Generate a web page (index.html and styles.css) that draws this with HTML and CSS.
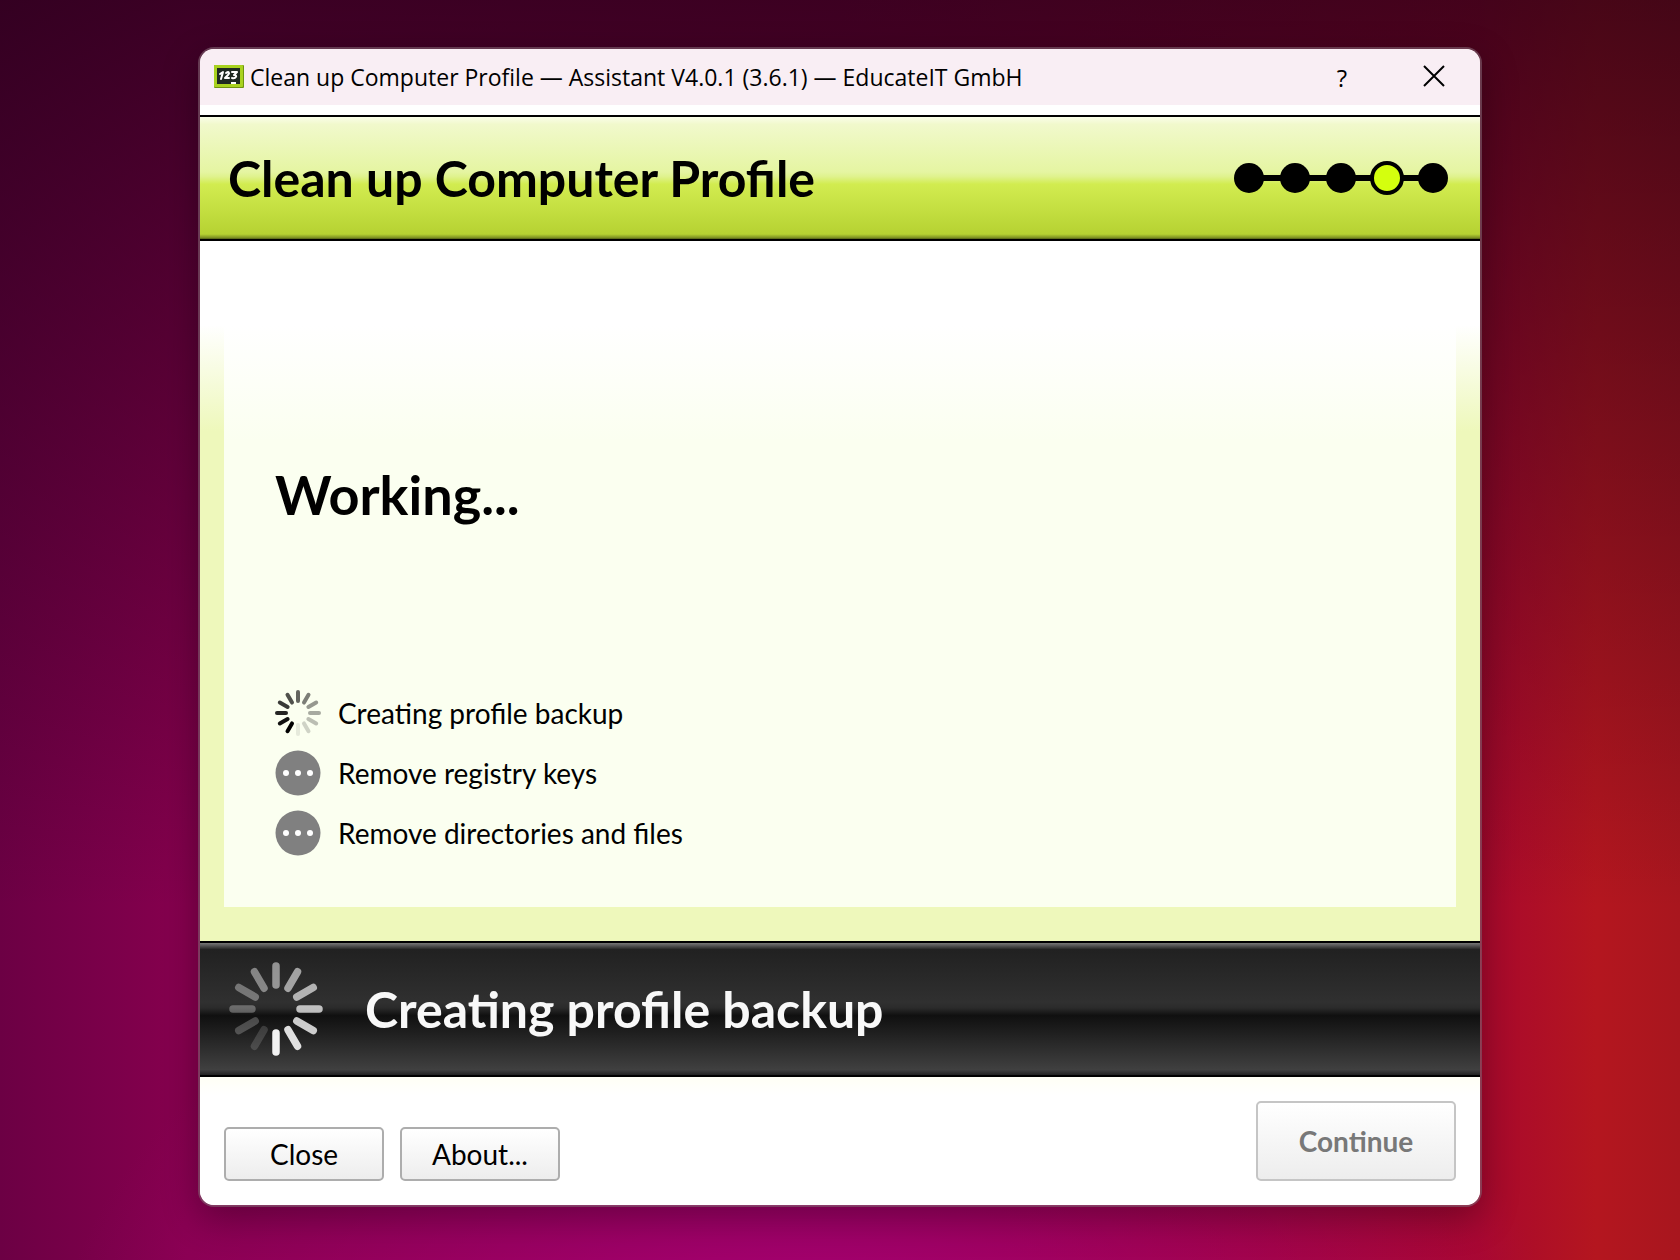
FILE: index.html
```html
<!DOCTYPE html>
<html lang="en">
<head>
    <meta charset="UTF-8">
    <meta name="viewport" content="width=device-width, initial-scale=1.0">
    <title>Clean up Computer Profile</title>
    <link rel="stylesheet" href="styles.css">
</head>
<body>
    <main class="window">
        <header class="titlebar">
            <svg class="app-icon" viewBox="0 0 30 24" aria-hidden="true">
                <rect width="30" height="23" rx="1" fill="#6f9410"/>
                <rect width="29" height="22" rx="1" fill="#a9d21f"/>
                <rect x="3" y="3" width="23" height="16" fill="#1f2a22"/>
                <g fill="none" stroke="#fff" stroke-width="2" stroke-linecap="round" stroke-linejoin="round">
                    <path d="M6 9l3-2-2 7"/>
                    <path d="M12 8c3-2 4 0 2 2l-3 3h4"/>
                    <path d="M18 7h5l-3 3c4 0 2 4-2 3"/>
                </g>
                <path d="M17 18h5" stroke="#fff" stroke-width="2"/>
            </svg>
            <span class="titlebar-text">Clean up Computer Profile — Assistant V4.0.1 (3.6.1) — EducateIT GmbH</span>
            <button class="titlebar-button" type="button" aria-label="Help">?</button>
            <button class="titlebar-button" type="button" aria-label="Close window">
                <svg class="close-icon" viewBox="0 0 22 22"><path d="M1 1l20 20M21 1L1 21"/></svg>
            </button>
        </header>

        <section class="banner">
            <h1>Clean up Computer Profile</h1>
            <ol class="steps" aria-label="Progress">
                <li class="step"></li>
                <li class="step"></li>
                <li class="step"></li>
                <li class="step current" aria-current="step"></li>
                <li class="step"></li>
            </ol>
        </section>

        <section class="content">
            <div class="panel">
                <h2>Working...</h2>
                <ul class="tasks">
                    <li>
                        <svg class="task-icon" viewBox="-23 -23 46 46" aria-hidden="true"><use href="#spinner-small"/></svg>
                        Creating profile backup
                    </li>
                    <li>
                        <svg class="task-icon" viewBox="-23 -23 46 46" aria-hidden="true"><use href="#pending"/></svg>
                        Remove registry keys
                    </li>
                    <li>
                        <svg class="task-icon" viewBox="-23 -23 46 46" aria-hidden="true"><use href="#pending"/></svg>
                        Remove directories and files
                    </li>
                </ul>
            </div>
        </section>

        <section class="status">
            <svg class="status-spinner" viewBox="-47 -47 94 94" aria-hidden="true">
                <g stroke="#fff" stroke-width="7.5" stroke-linecap="round">
                    <path d="M0-24v-19" opacity=".5"/>
                    <path d="M0-24v-19" opacity=".57" transform="rotate(30)"/>
                    <path d="M0-24v-19" opacity=".64" transform="rotate(60)"/>
                    <path d="M0-24v-19" opacity=".71" transform="rotate(90)"/>
                    <path d="M0-24v-19" opacity=".78" transform="rotate(120)"/>
                    <path d="M0-24v-19" opacity=".86" transform="rotate(150)"/>
                    <path d="M0-24v-19" opacity=".94" transform="rotate(180)"/>
                    <path d="M0-24v-19" opacity=".15" transform="rotate(210)"/>
                    <path d="M0-24v-19" opacity=".23" transform="rotate(240)"/>
                    <path d="M0-24v-19" opacity=".3" transform="rotate(270)"/>
                    <path d="M0-24v-19" opacity=".35" transform="rotate(300)"/>
                    <path d="M0-24v-19" opacity=".43" transform="rotate(330)"/>
                </g>
            </svg>
            <p>Creating profile backup</p>
        </section>

        <footer class="actions">
            <button class="button" type="button">Close</button>
            <button class="button" type="button">About...</button>
            <button class="button button-continue" type="button" disabled>Continue</button>
        </footer>
    </main>

    <svg class="symbols" width="0" height="0" aria-hidden="true">
        <defs>
            <g id="spinner-small" stroke="#000" stroke-width="4" stroke-linecap="round">
                <path d="M0-12v-9" opacity=".6"/>
                <path d="M0-12v-9" opacity=".5" transform="rotate(30)"/>
                <path d="M0-12v-9" opacity=".4" transform="rotate(60)"/>
                <path d="M0-12v-9" opacity=".33" transform="rotate(90)"/>
                <path d="M0-12v-9" opacity=".25" transform="rotate(120)"/>
                <path d="M0-12v-9" opacity=".17" transform="rotate(150)"/>
                <path d="M0-12v-9" opacity=".08" transform="rotate(180)"/>
                <path d="M0-12v-9" transform="rotate(210)"/>
                <path d="M0-12v-9" opacity=".93" transform="rotate(240)"/>
                <path d="M0-12v-9" opacity=".85" transform="rotate(270)"/>
                <path d="M0-12v-9" opacity=".77" transform="rotate(300)"/>
                <path d="M0-12v-9" opacity=".68" transform="rotate(330)"/>
            </g>
            <g id="pending">
                <circle r="22.5" fill="#808080"/>
                <circle cx="-12" r="3" fill="#fff"/>
                <circle r="3" fill="#fff"/>
                <circle cx="12" r="3" fill="#fff"/>
            </g>
        </defs>
    </svg>
</body>
</html>
```

FILE: styles.css
```css
* {
    margin: 0;
    padding: 0;
    box-sizing: border-box;
}

body {
    font-family: Lato, sans-serif;
    color: #000;
    min-height: 100vh;
    display: flex;
    padding: 47px 198px 53px;
    background:
        radial-gradient(ellipse 45% 40% at 48% 110%, #a80078 0%, rgba(168, 0, 120, 0) 100%),
        linear-gradient(to bottom, rgba(30, 0, 20, 0.72) 0%, rgba(30, 0, 20, 0) 72%),
        linear-gradient(to right, #6c0044 0%, #86004e 11%, #8c0044 50%, #a8082e 88%, #b4161f 95%, #a8161e 100%);
}

.window {
    flex: 1;
    display: flex;
    flex-direction: column;
    overflow: hidden;
    background: #fff;
    background-clip: padding-box;
    border: 2px solid rgba(128, 96, 112, 0.6);
    border-radius: 16px;
    box-shadow: 0 12px 36px rgba(0, 0, 0, 0.3);
}

/* Title bar */
.titlebar {
    height: 56px;
    display: flex;
    align-items: center;
    padding-left: 14px;
    background: #f9eef4;
    font-family: "Open Sans", sans-serif;
    font-size: 24px;
}

.app-icon {
    width: 30px;
    height: 24px;
    margin-right: 6px;
}

.titlebar-text {
    flex: 1;
    font-size: 23px;
}

.titlebar-button {
    width: 92px;
    height: 56px;
    border: none;
    background: none;
    font: inherit;
}

.close-icon {
    width: 22px;
    height: 22px;
    fill: none;
    stroke: #000;
    stroke-width: 2;
}

/* Green banner */
.banner {
    display: flex;
    align-items: center;
    justify-content: space-between;
    height: 126px;
    margin-top: 10px;
    padding: 0 32px 0 28px;
    border-top: 2px solid #000;
    border-bottom: 2px solid #000;
    background: linear-gradient(to bottom, #fafde8 0%, #f1f9cc 6%, #e5f5a2 45%, #dff28c 49%, #d2ec50 55%, #b6d232 96%, #7c9022 99%, #4d5a15 100%);
}

h1 {
    font-size: 50px;
    line-height: 60px;
}

/* The black line behind the dots joins the steps */
.steps {
    display: flex;
    align-items: center;
    gap: 16px;
    list-style: none;
    background: linear-gradient(#000, #000) center / calc(100% - 20px) 6px no-repeat;
}

.step {
    width: 30px;
    height: 30px;
    border-radius: 50%;
    background: #000;
}

.step.current {
    width: 34px;
    height: 34px;
    margin: 0 -2px;
    background: #d4ff0e;
    border: 4px solid #000;
}

/* Content */
.content {
    flex: 1;
    padding: 0 24px 34px;
    background: linear-gradient(to bottom, #fff 84px, #eef8bb 190px);
}

.panel {
    height: 100%;
    display: flex;
    flex-direction: column;
    justify-content: space-between;
    padding: 224px 51px 51px;
    background: linear-gradient(to bottom, #fff 84px, #fbfff0 200px);
}

h2 {
    font-size: 54px;
    line-height: 60px;
}

.tasks {
    display: grid;
    gap: 14px;
    list-style: none;
    font-size: 28px;
}

.tasks li {
    display: flex;
    align-items: center;
    gap: 17px;
}

.task-icon {
    width: 46px;
    height: 46px;
}

/* Status strip */
.status {
    display: flex;
    align-items: center;
    gap: 42px;
    height: 136px;
    padding: 0 29px;
    border-top: 2px solid #000;
    border-bottom: 2px solid #000;
    background: linear-gradient(to bottom, #777 0%, #555 2%, #212121 5%, #303030 45%, #2b2b2b 49%, #101010 55%, #404040 96%, #222 100%);
    color: #f8f8f8;
    font-size: 50px;
    font-weight: 700;
}

.status-spinner {
    width: 94px;
    height: 94px;
}

/* Footer */
.actions {
    display: flex;
    align-items: flex-end;
    gap: 16px;
    padding: 24px;
    background: linear-gradient(to bottom, #fffff5 0, #fff 18px);
}

.button {
    width: 160px;
    height: 54px;
    border: 2px solid #adadad;
    border-radius: 5px;
    background: linear-gradient(to bottom, #fff, #ededed);
    color: #000;
    font-family: inherit;
    font-size: 28px;
}

.button-continue {
    width: 200px;
    height: 80px;
    margin-left: auto;
    border-color: #c5c5c5;
    color: #787878;
    font-weight: 700;
}

.symbols {
    position: absolute;
}
```
